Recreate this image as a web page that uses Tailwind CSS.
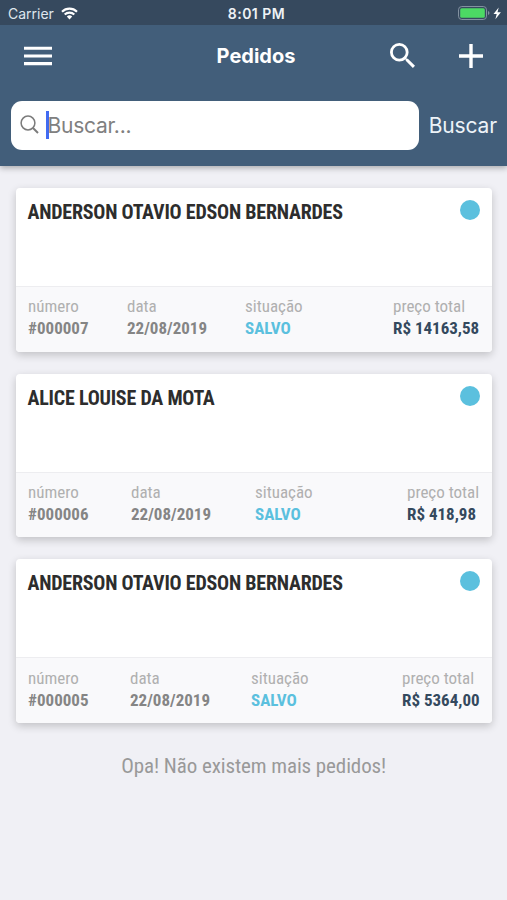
<!DOCTYPE html>
<html lang="pt-BR">
<head>
    <meta charset="UTF-8">
    <meta name="viewport" content="width=device-width, initial-scale=1.0">
    <title>Pedidos</title>
    <!-- Tailwind CSS CDN -->
    <script src="https://cdn.jsdelivr.net/npm/@tailwindcss/browser@4"></script>
</head>
<body class="h-[900px] overflow-hidden bg-[#f0f0f5] font-['Roboto_Condensed','Roboto',sans-serif] [font-stretch:75%]">
    <!-- Cabeçalho -->
    <header class="h-[166px] bg-[#425e7a] text-white font-['Inter',sans-serif] [font-stretch:100%] shadow-[0_2px_6px_rgba(0,0,0,0.3)]">
        <!-- Barra de status -->
        <div class="grid grid-cols-3 items-center h-[25px] pt-[2px] pl-2 pr-[5px] bg-[#36495e] text-[14px] leading-5">
            <div class="flex items-center gap-[7px] text-[#dfe6ed]">
                <span>Carrier</span>
                <svg class="w-[17px] h-[13px]" viewBox="0 0 17 13" fill="none" stroke="#fff" stroke-width="2.1">
                    <path d="M1 4.7a10.6 10.6 0 0 1 15 0M3.7 7.6a6.8 6.8 0 0 1 9.6 0"/>
                    <path d="M5.8 9.6a3.8 3.8 0 0 1 5.4 0L8.5 12.4z" fill="#fff" stroke="none"/>
                </svg>
            </div>
            <span class="pl-[3px] text-center font-semibold tracking-[0.5px] text-[#eef2f6]">8:01 PM</span>
            <svg class="w-[44px] h-[15px] justify-self-end" viewBox="0 0 44 15">
                <rect x=".5" y=".5" width="28" height="13" rx="3.3" fill="none" stroke="#8391a0"/>
                <rect x="2.2" y="2.2" width="24.6" height="9.6" rx="1.5" fill="#4cd964"/>
                <path d="M30 5v4q1.500-.5 1.500-2T30 5z" fill="#8391a0"/>
                <path d="M40.700 1.500 35.500 8h3.200l-1.300 5.200L42.900 6.300h-3.400z" fill="#fff"/>
            </svg>
        </div>

        <!-- Título e ações -->
        <div class="flex items-center justify-between h-[62px] px-6">
            <div class="flex w-[98px]">
                <svg class="w-7 h-5" viewBox="0 0 28 20" fill="#fff">
                    <path d="M0 .7h28v3.100H0zM0 8.400h28v3.100H0zM0 16.100h28v3.100H0z"/>
                </svg>
            </div>
            <h1 class="text-[20px] font-bold">Pedidos</h1>
            <div class="flex items-center justify-between w-[93px]">
                <svg class="w-[25px] h-[25px] -mt-0.5" viewBox="3 3 17.490 17.490" fill="#fff">
                    <path d="M15.500 14h-.79l-.28-.27A6.471 6.471 0 0 0 16 9.500 6.500 6.500 0 1 0 9.500 16c1.610 0 3.090-.59 4.230-1.570l.27.28v.79l5 4.990L20.490 19l-4.990-5zm-6 0C7.010 14 5 11.990 5 9.500S7.010 5 9.500 5 14 7.010 14 9.500 11.990 14 9.500 14z"/>
                </svg>
                <svg class="w-6 h-6" viewBox="0 0 24 24" fill="#fff">
                    <path d="M10.300 0h3.400v10.300H24v3.400H13.700V24h-3.400V13.700H0v-3.400h10.300z"/>
                </svg>
            </div>
        </div>

        <!-- Busca -->
        <div class="flex items-center pt-[14px] pl-[11px] pr-[10px] justify-between">
            <div class="flex items-center w-[408px] h-[49px] rounded-[11px] bg-white pl-[9px]">
                <svg class="w-[19px] h-[19px] -mt-0.5" viewBox="0 0 19 19" fill="none" stroke="#7b7b7b">
                    <circle cx="8" cy="8" r="6.900" stroke-width="1.500"/>
                    <path d="m13 13 5 5" stroke-width="2"/>
                </svg>
                <span class="w-[2.500px] h-7 ml-[7px] -mt-px bg-[#426bf2]"></span>
                <span class="-ml-px text-[21px] tracking-[-0.25px] text-[#808080]">Buscar...</span>
            </div>
            <span class="text-[21px] tracking-[-0.15px] text-[#edf3f8]">Buscar</span>
        </div>
    </header>

    <!-- Lista de pedidos -->
    <main class="flex flex-col gap-[22px] pt-[21.850px] pl-[15.500px] pr-[15px]">
        <article class="h-[163.700px] rounded-[4px] bg-white overflow-hidden shadow-[0_3px_8px_rgba(0,0,0,0.2)]">
            <div class="flex justify-between h-[98px] pt-3 px-3">
                <h2 class="text-[20px] leading-6 font-bold tracking-[-0.22px] text-[#2d2d2d] whitespace-nowrap">ANDERSON OTAVIO EDSON BERNARDES</h2>
                <span class="size-5 rounded-full bg-[#5bc0de]"></span>
            </div>
            <div class="grid grid-cols-[99px_118px_148px_auto] h-[66px] border-t border-[#ededf0] bg-[#f9f9fb] pt-[8.300px] pl-[12.500px] text-[17px] leading-[22px] text-[#b0b0b0] whitespace-nowrap">
                <div>número<p class="font-bold text-[#858585]">#000007</p></div>
                <div>data<p class="font-bold text-[#858585]">22/08/2019</p></div>
                <div>situação<p class="font-bold text-[#5bc0de]">SALVO</p></div>
                <div>preço total<p class="font-bold text-[#34495e]">R$ 14163,58</p></div>
            </div>
        </article>

        <article class="h-[163.700px] rounded-[4px] bg-white overflow-hidden shadow-[0_3px_8px_rgba(0,0,0,0.2)]">
            <div class="flex justify-between h-[98px] pt-3 px-3">
                <h2 class="text-[20px] leading-6 font-bold tracking-[-0.22px] text-[#2d2d2d] whitespace-nowrap">ALICE LOUISE DA MOTA</h2>
                <span class="size-5 rounded-full bg-[#5bc0de]"></span>
            </div>
            <div class="grid grid-cols-[103px_124px_152px_auto] h-[66px] border-t border-[#ededf0] bg-[#f9f9fb] pt-[8.300px] pl-[12.500px] text-[17px] leading-[22px] text-[#b0b0b0] whitespace-nowrap">
                <div>número<p class="font-bold text-[#858585]">#000006</p></div>
                <div>data<p class="font-bold text-[#858585]">22/08/2019</p></div>
                <div>situação<p class="font-bold text-[#5bc0de]">SALVO</p></div>
                <div>preço total<p class="font-bold text-[#34495e]">R$ 418,98</p></div>
            </div>
        </article>

        <article class="h-[163.700px] rounded-[4px] bg-white overflow-hidden shadow-[0_3px_8px_rgba(0,0,0,0.2)]">
            <div class="flex justify-between h-[98px] pt-3 px-3">
                <h2 class="text-[20px] leading-6 font-bold tracking-[-0.22px] text-[#2d2d2d] whitespace-nowrap">ANDERSON OTAVIO EDSON BERNARDES</h2>
                <span class="size-5 rounded-full bg-[#5bc0de]"></span>
            </div>
            <div class="grid grid-cols-[102px_121px_151px_auto] h-[66px] border-t border-[#ededf0] bg-[#f9f9fb] pt-[8.300px] pl-[12.500px] text-[17px] leading-[22px] text-[#b0b0b0] whitespace-nowrap">
                <div>número<p class="font-bold text-[#858585]">#000005</p></div>
                <div>data<p class="font-bold text-[#858585]">22/08/2019</p></div>
                <div>situação<p class="font-bold text-[#5bc0de]">SALVO</p></div>
                <div>preço total<p class="font-bold text-[#34495e]">R$ 5364,00</p></div>
            </div>
        </article>

        <p class="pt-[7px] text-center text-[21px] leading-7 tracking-[-0.1px] text-[#999]">Opa! Não existem mais pedidos!</p>
    </main>
</body>
</html>
